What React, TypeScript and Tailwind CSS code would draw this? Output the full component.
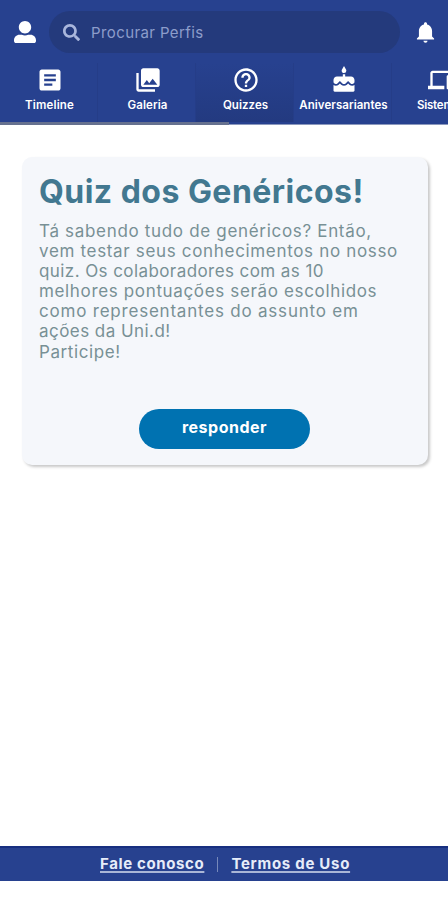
import { FaSearch, FaUserAlt } from "react-icons/fa";
import { IoMdNotifications } from "react-icons/io";
import { MdArticle, MdCake, MdDevices, MdHelpOutline, MdPhotoLibrary } from "react-icons/md";
import clsx from "clsx";

const tabs = [
  { label: "Timeline", icon: MdArticle, tracking: "tracking-[0.2px]" },
  { label: "Galeria", icon: MdPhotoLibrary, tracking: "tracking-[0.1px]" },
  { label: "Quizzes", icon: MdHelpOutline, tracking: "tracking-[0.05px]", active: true },
  { label: "Aniversariantes", icon: MdCake, tracking: "tracking-[0.05px]" },
  { label: "Sistemas", icon: MdDevices, tracking: "tracking-[-0.2px]" },
];

const quizLines = [
  { text: "Tá sabendo tudo de genéricos? Então,", tracking: "tracking-[0.68px]" },
  { text: "vem testar seus conhecimentos no nosso", tracking: "tracking-[0.67px]" },
  { text: "quiz. Os colaboradores com as 10", tracking: "tracking-[0.42px]" },
  { text: "melhores pontuações serão escolhidos", tracking: "tracking-[0.65px]" },
  { text: "como representantes do assunto em", tracking: "tracking-[0.79px]" },
  { text: "ações da Uni.d!", tracking: "tracking-[0.45px]" },
  { text: "Participe!", tracking: "tracking-[0.6px]" },
];

export default function App() {
  return (
    <div className="flex h-[900px] w-[448px] flex-col overflow-hidden bg-white font-['Inter',sans-serif]">
      <Header />
      <main className="flex-1 px-[22px] pt-[32px]">
        <QuizCard />
      </main>
      <Footer />
    </div>
  );
}

function Header() {
  return (
    <header className="h-[125px] shrink-0 bg-[#27418f]">
      <div className="flex h-[63px] items-center pt-[1px]">
        <FaUserAlt className="ml-[14px] size-[22px] shrink-0 text-white" />
        <div className="ml-[13px] flex h-[42px] w-[351px] shrink-0 items-center rounded-full bg-[#243a7c] pl-[14px]">
          <FaSearch className="mt-px size-[17px] text-[#a9b6dc]" />
          <span className="mt-[2px] ml-[11px] text-[15px] tracking-[0.4px] text-[#8d9dcb]">Procurar Perfis</span>
        </div>
        <IoMdNotifications className="ml-[13px] size-[25px] shrink-0 text-white" />
      </div>
      <nav className="flex h-[59px] overflow-hidden">
        {tabs.map(({ label, icon: Icon, tracking, active }) => (
          <div
            key={label}
            className={clsx(
              "flex w-[98px] shrink-0 flex-col items-center border-r border-[#253d88] pt-[3px] pl-[2px]",
              active && "bg-gradient-to-b from-[#27418f] to-[#233a80]"
            )}
          >
            <Icon className="size-[28px] text-white" />
            <span className={clsx("mt-[3px] text-[11.5px] leading-[16px] font-semibold text-white", tracking)}>{label}</span>
          </div>
        ))}
      </nav>
      {/* horizontal scroll indicator of the tab bar */}
      <div className="h-[3px] border-b border-[#8b98bd] bg-[#27418f]">
        <div className="h-[3px] w-[229px] bg-[#66718f]" />
      </div>
    </header>
  );
}

function QuizCard() {
  return (
    <section className="flex h-[308px] w-[406px] flex-col rounded-[10px] bg-[#f5f7fb] pl-[17px] shadow-[2px_2px_3px_rgba(0,0,0,0.22)]">
      <h1 className="mt-[14px] text-[32px] leading-[42px] font-bold tracking-[0.47px] whitespace-nowrap text-[#427890]">
        Quiz dos Genéricos!
      </h1>
      <div className="mt-[8px] text-[17px] leading-[20.1px] text-[#789095]">
        {quizLines.map((line) => (
          <div key={line.text}>
            <span className={clsx("whitespace-nowrap", line.tracking)}>{line.text}</span>
          </div>
        ))}
      </div>
      <button className="mt-[47px] ml-[100px] h-[40px] w-[171px] rounded-full bg-[#0072b1] pb-[3px] text-[16px] font-bold tracking-[0.5px] text-white">
        responder
      </button>
    </section>
  );
}

function Footer() {
  return (
    <footer className="mb-[19px] flex h-[35px] shrink-0 items-center border-t-2 border-[#172f80] bg-[#27418f] pl-[100px] text-[15px] font-bold text-[#e6ecf9]">
      <a className="tracking-[0.63px] underline decoration-[#aab6d6] decoration-2 underline-offset-2">Fale conosco</a>
      <span className="mx-[13px] h-[15px] w-px bg-[#7688ba]" />
      <a className="tracking-[0.72px] underline decoration-[#aab6d6] decoration-2 underline-offset-2">Termos de Uso</a>
    </footer>
  );
}
